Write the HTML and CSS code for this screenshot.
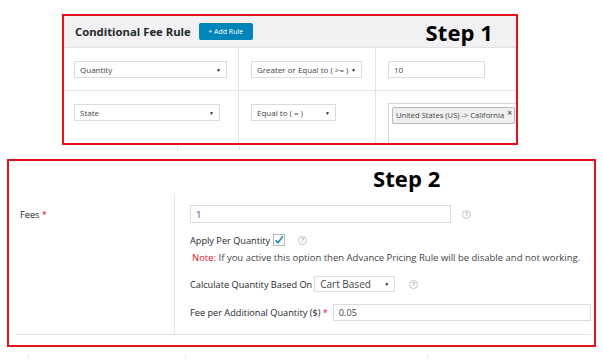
FILE: index.html
```html
<!DOCTYPE html>
<html lang="en">
<head>
    <meta charset="UTF-8">
    <meta name="viewport" content="width=device-width, initial-scale=1.0">
    <title>Conditional Fee Rule</title>
    <link rel="stylesheet" href="styles.css">
</head>
<body>
    <div class="step-one">
        <div class="rule-head">
            <h2 class="rule-title">Conditional Fee Rule</h2>
            <button class="add-rule">+ Add Rule</button>
            <div class="step-label step-label-1">Step 1</div>
        </div>
        <div class="rule-row">
            <div class="cell cell-name">
                <div class="select select-name">Quantity<span class="arrow">&#9660;</span></div>
            </div>
            <div class="cell cell-op">
                <div class="select select-op">Greater or Equal to ( &gt;= )<span class="arrow">&#9660;</span></div>
            </div>
            <div class="cell cell-value">
                <div class="input input-qty">10</div>
            </div>
        </div>
        <div class="rule-row rule-row-2">
            <div class="cell cell-name">
                <div class="select select-state">State<span class="arrow">&#9660;</span></div>
            </div>
            <div class="cell cell-op">
                <div class="select select-eq">Equal to ( = )<span class="arrow">&#9660;</span></div>
            </div>
            <div class="cell cell-value">
                <div class="multi">
                    <span class="tag">United States (US) -&gt; California <span class="tag-x">&times;</span></span>
                </div>
            </div>
        </div>
    </div>

    <div class="gap-ticks">
        <span class="tick tick-a"></span>
        <span class="tick tick-b"></span>
    </div>

    <div class="step-two">
        <div class="step-two-head">
            <div class="step-label">Step 2</div>
        </div>
        <div class="fee-row">
            <div class="fee-label">Fees <span class="req">*</span></div>
            <div class="fee-fields">
                <div class="line line-fee">
                    <div class="input input-fee">1</div>
                    <span class="help">?</span>
                </div>
                <div class="line line-apply">
                    <span class="text">Apply Per Quantity</span>
                    <span class="checkbox">
                        <svg width="10" height="10" viewBox="0 0 10 10"><path d="M1.5 5.2 L4 7.8 L8.8 1.2" fill="none" stroke="#1e8cbe" stroke-width="1.6"/></svg>
                    </span>
                    <span class="help help-apply">?</span>
                </div>
                <div class="line note">
                    <span class="note-red">Note:</span> If you active this option then Advance Pricing Rule will be disable and not working.
                </div>
                <div class="line line-calc">
                    <span class="text">Calculate Quantity Based On</span>
                    <div class="select select-cart">Cart Based<span class="arrow">&#9660;</span></div>
                    <span class="help help-calc">?</span>
                </div>
                <div class="line line-extra">
                    <span class="text">Fee per Additional Quantity ($) <span class="req">*</span></span>
                    <div class="input input-extra">0.05</div>
                </div>
            </div>
        </div>
    </div>

    <div class="bottom-ticks">
        <span class="tick tick-c"></span>
        <span class="tick tick-d"></span>
        <span class="tick tick-e"></span>
    </div>
</body>
</html>
```

FILE: styles.css
```css
html, body {
    margin: 0;
    background-color: #fff;
    font-family: 'Open Sans', 'Noto Sans', sans-serif;
    color: #32373c;
    font-size: 9.2px;
}

/* ---------- step 1 ---------- */

.step-one {
    margin: 14px 0 0 62px;
    width: 452px;
    height: 127px;
    border: 2px solid #e3131b;
    overflow: hidden;
    font-size: 8px;
}

.rule-head {
    display: flex;
    align-items: center;
    height: 31px;
    padding-left: 11px;
    background-color: #f1f1f3;
    border-bottom: 1px solid #e2e2e2;
}

.rule-title {
    margin: 0;
    font-size: 11.3px;
    font-weight: 700;
    color: #23282d;
}

.add-rule {
    margin-left: 8px;
    height: 17px;
    width: 54px;
    padding: 0;
    border: none;
    border-radius: 2px;
    background-color: #0085ba;
    color: #fff;
    font-family: 'Open Sans', sans-serif;
    font-size: 7px;
}

.step-label {
    font-size: 22px;
    font-weight: 700;
    color: #000;
    letter-spacing: 0.1px;
}

.step-label-1 {
    margin-left: auto;
    margin-right: 23px;
}

.rule-row {
    display: flex;
    height: 42px;
    border-bottom: 1px solid #e5e5e5;
}

.rule-row-2 {
    height: 60px;
}

.cell {
    box-sizing: border-box;
    flex-shrink: 0;
    padding: 13px 0 0 10px;
}

.cell-name {
    width: 175px;
    border-right: 1px solid #e5e5e5;
}

.cell-op {
    width: 137px;
    padding-left: 12px;
    border-right: 1px solid #e5e5e5;
}

.cell-value {
    width: 160px;
    padding-left: 12px;
}

.select, .input {
    box-sizing: border-box;
    display: flex;
    align-items: center;
    height: 17px;
    padding: 0 5px;
    border: 1px solid #dcdcdc;
    background-color: #fff;
    color: #444;
    white-space: nowrap;
}

.arrow {
    margin-left: auto;
    font-size: 5px;
    color: #222;
}

.select-name { width: 153px; }
.select-op { width: 111px; }
.input-qty { width: 97px; }
.select-state { width: 146px; }
.select-eq { width: 85px; }

.multi {
    box-sizing: border-box;
    width: 150px;
    height: 60px;
    margin-top: -1px;
    padding: 3px;
    border: 1px solid #d5d5d5;
}

.tag {
    display: inline-flex;
    align-items: flex-start;
    height: 15px;
    line-height: 15px;
    padding: 0 2px 0 3px;
    border: 1px solid #b9b9b9;
    border-radius: 2px;
    background-color: #efefef;
    color: #444;
    font-size: 7.6px;
    white-space: nowrap;
}

.tag-x {
    margin-left: 3px;
    font-size: 8.5px;
    line-height: 9px;
    font-weight: 700;
    color: #555;
}

.gap-ticks, .bottom-ticks {
    position: relative;
    height: 14px;
}

.bottom-ticks {
    height: 12px;
}

.tick {
    position: absolute;
    top: 1px;
    width: 1px;
    height: 5px;
    background-color: #e5e5e5;
}

.tick-a { left: 177px; }
.tick-b { left: 239px; }

/* ---------- step 2 ---------- */

.step-two {
    box-sizing: border-box;
    margin-left: 7px;
    width: 589px;
    height: 188px;
    border: 2px solid #e3131b;
    padding: 0 3px 10px 7px;
}

.step-two-head {
    height: 34px;
    padding-left: 357px;
    display: flex;
    align-items: center;
}

.fee-row {
    display: flex;
    border-bottom: 1px solid #e2e2e2;
    height: 139px;
    color: #23282d;
}

.fee-label {
    box-sizing: border-box;
    width: 159px;
    padding: 13px 0 0 4px;
    border-right: 1px solid #e5e5e5;
}

.req {
    color: #e3131b;
}

.fee-fields {
    flex: 1;
    padding: 10px 0 0 15px;
}

.line {
    display: flex;
    align-items: center;
}

.text {
    flex-shrink: 0;
    white-space: nowrap;
}

.input-fee {
    width: 261px;
    height: 18px;
    color: #3c3c8c;
    font-size: 9.5px;
}

.help {
    box-sizing: border-box;
    display: inline-flex;
    align-items: center;
    justify-content: center;
    width: 9px;
    height: 9px;
    margin-left: 11px;
    border: 1px solid #c3c3c3;
    border-radius: 50%;
    color: #b0b0b0;
    font-size: 6px;
    font-weight: 700;
}

.line-apply {
    margin-top: 10px;
    height: 14px;
}

.checkbox {
    box-sizing: border-box;
    display: inline-flex;
    align-items: center;
    justify-content: center;
    width: 12px;
    height: 12px;
    margin-left: 3px;
    border: 1px solid #b4b9be;
    background-color: #fff;
}

.help-apply { margin-left: 13px; }

.note {
    display: block;
    margin-top: 5px;
    margin-left: 2px;
    color: #444;
    font-size: 9.5px;
    line-height: 12px;
}

.note-red {
    color: #f0141e;
}

.line-calc {
    margin-top: 12px;
}

.select-cart {
    width: 81px;
    height: 16px;
    margin-left: 2px;
    font-size: 10px;
}

.help-calc { margin-left: 14px; }

.line-extra {
    margin-top: 12px;
}

.input-extra {
    flex: 1;
    margin-left: 5px;
}

.tick-c { left: 28px; }
.tick-d { left: 185px; }
.tick-e { left: 427px; }
.bottom-ticks .tick { top: 8px; }
```
